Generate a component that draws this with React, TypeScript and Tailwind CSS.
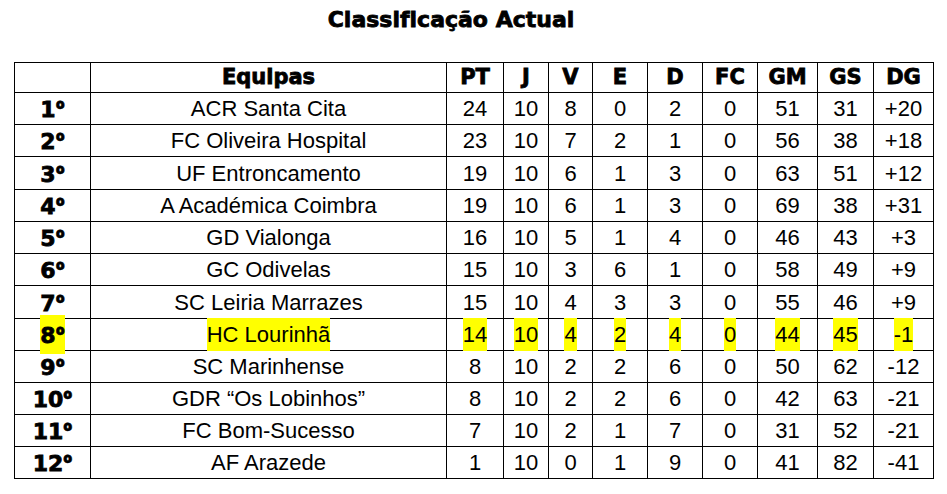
import React from "react";

const cols = ["w-[76px]", "w-[356px]", "w-[57px]", "w-[45px]", "w-[44px]", "w-[55px]", "w-[55px]", "w-[55px]", "w-[60px]", "w-[56px]", "w-[60px]"];

const headers = ["", "Equipas", "PT", "J", "V", "E", "D", "FC", "GM", "GS", "DG"];

const rows: string[][] = [
  ["1", "ACR Santa Cita", "24", "10", "8", "0", "2", "0", "51", "31", "+20"],
  ["2", "FC Oliveira Hospital", "23", "10", "7", "2", "1", "0", "56", "38", "+18"],
  ["3", "UF Entroncamento", "19", "10", "6", "1", "3", "0", "63", "51", "+12"],
  ["4", "A Académica Coimbra", "19", "10", "6", "1", "3", "0", "69", "38", "+31"],
  ["5", "GD Vialonga", "16", "10", "5", "1", "4", "0", "46", "43", "+3"],
  ["6", "GC Odivelas", "15", "10", "3", "6", "1", "0", "58", "49", "+9"],
  ["7", "SC Leiria Marrazes", "15", "10", "4", "3", "3", "0", "55", "46", "+9"],
  ["8", "HC Lourinhã", "14", "10", "4", "2", "4", "0", "44", "45", "-1"],
  ["9", "SC Marinhense", "8", "10", "2", "2", "6", "0", "50", "62", "-12"],
  ["10", "GDR “Os Lobinhos”", "8", "10", "2", "2", "6", "0", "42", "63", "-21"],
  ["11", "FC Bom-Sucesso", "7", "10", "2", "1", "7", "0", "31", "52", "-21"],
  ["12", "AF Arazede", "1", "10", "0", "1", "9", "0", "41", "82", "-41"],
];

const heights = ["h-[32px]", "h-[32px]", "h-[33px]", "h-[32px]", "h-[32px]", "h-[32px]", "h-[33px]", "h-[32px]", "h-[32px]", "h-[32px]", "h-[32px]", "h-[32px]"];

const heavy = "font-['DejaVu_Sans',sans-serif] font-bold [-webkit-text-stroke:0.8px_black] [font-variant-ligatures:none]";
const regular = "font-['Liberation_Sans',Arial,sans-serif] text-[22px]";

export default function App() {
  return (
    <div className="w-[947px] h-[494px] bg-white text-black overflow-hidden">
      <div className={`w-[902px] pt-[7px] h-[62px] text-center text-[22px] leading-[26px] ${heavy}`}>
        Classificação Actual
      </div>
      <div className="ml-[14px] w-[920px] border-l border-t border-black">
        <div className="flex h-[30px]">
          {headers.map((h, i) => (
            <div
              key={i}
              className={`${cols[i]} shrink-0 border-r border-b border-black flex items-center justify-center text-[21px] ${heavy}`}
            >
              {h}
            </div>
          ))}
        </div>
        {rows.map((r, ri) => {
          const hl = ri === 7;
          return (
            <div key={ri} className={`flex ${heights[ri]}`}>
              {r.map((c, ci) => (
                <div
                  key={ci}
                  className={`${cols[ci]} shrink-0 border-r border-b border-black flex items-center justify-center ${
                    ci === 0 ? `text-[22px] ${heavy}` : regular
                  }`}
                >
                  {ci === 0 ? (
                    <span className={hl ? "bg-[#ffff00] py-[2px]" : ""}>
                      {c}
                      <span className="font-['Open_Sans',sans-serif] font-extrabold text-[23px] [-webkit-text-stroke:0.5px_black]">º</span>
                    </span>
                  ) : (
                    <span className={hl ? "bg-[#ffff00]" : ""}>{c}</span>
                  )}
                </div>
              ))}
            </div>
          );
        })}
      </div>
    </div>
  );
}
